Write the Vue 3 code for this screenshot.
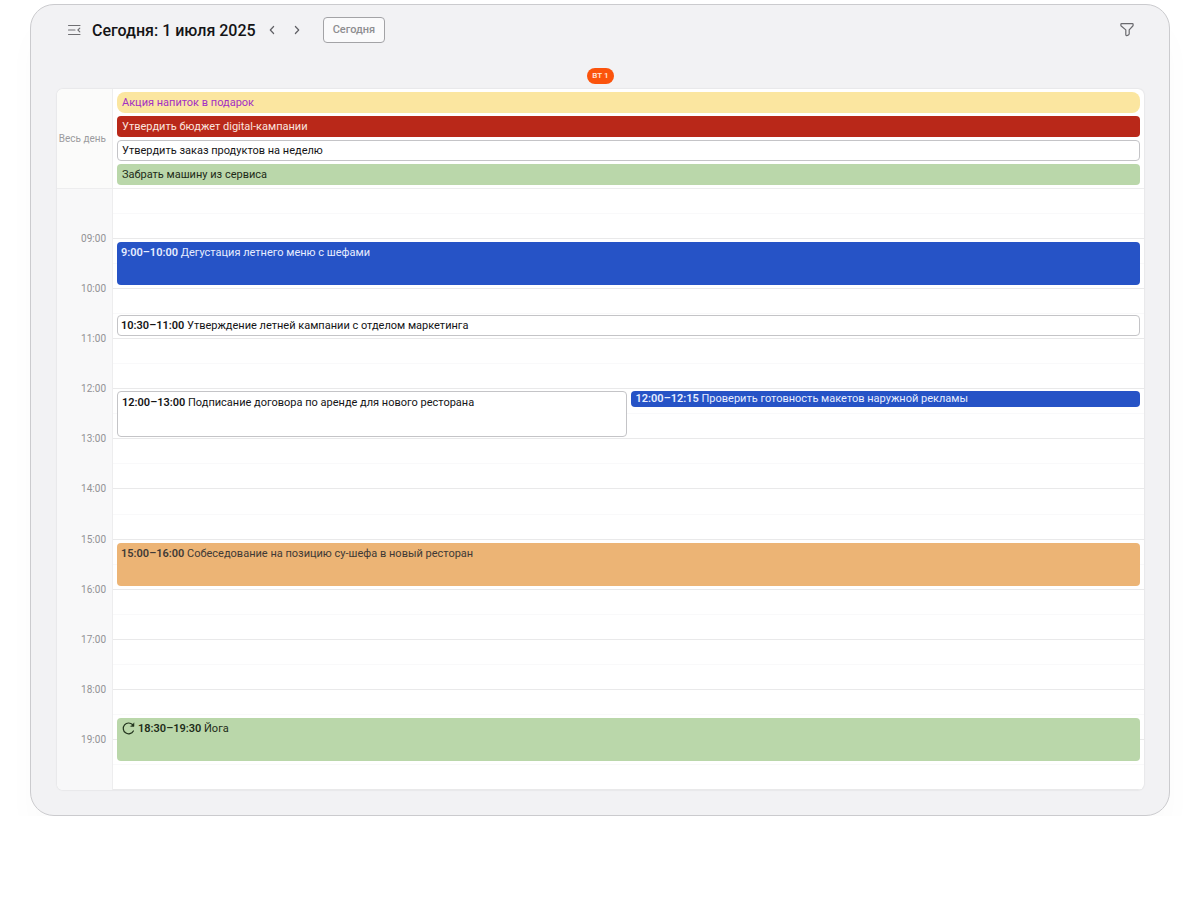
<script setup>
const allDay = [
  { text: 'Акция напиток в подарок', tone: 'yellow' },
  { text: 'Утвердить бюджет digital-кампании', tone: 'red' },
  { text: 'Утвердить заказ продуктов на неделю', tone: 'white' },
  { text: 'Забрать машину из сервиса', tone: 'green' },
]

const FIRST_HOUR = 8
const hours = Array.from({ length: 11 }, (_, i) => FIRST_HOUR + 1 + i)
const halves = Array.from({ length: 24 }, (_, i) => i)

const events = [
  { from: 9, to: 10, time: '9:00–10:00', text: 'Дегустация летнего меню с шефами', tone: 'blue', lane: 'full' },
  { from: 10.5, to: 11, time: '10:30–11:00', text: 'Утверждение летней кампании с отделом маркетинга', tone: 'white', lane: 'full' },
  { from: 12, to: 13, time: '12:00–13:00', text: 'Подписание договора по аренде для нового ресторана', tone: 'white', lane: 'left' },
  { from: 12, to: 12.5, time: '12:00–12:15', text: 'Проверить готовность макетов наружной рекламы', tone: 'blue', lane: 'right', short: true },
  { from: 15, to: 16, time: '15:00–16:00', text: 'Собеседование на позицию су-шефа в новый ресторан', tone: 'orange', lane: 'full' },
  { from: 18.5, to: 19.5, time: '18:30–19:30', text: 'Йога', tone: 'green', lane: 'full', repeat: true },
]

const row = (hour) => (hour - FIRST_HOUR) * 2 + 1
const rows = (from, to) => ({ gridRow: `${row(from)} / ${row(to)}` })
const label = (hour) => `${String(hour).padStart(2, '0')}:00`
</script>

<template>
  <main class="frame">
    <header class="toolbar">
      <button class="icon-btn" type="button" aria-label="Меню">
        <svg width="14" height="14" viewBox="0 0 14 14" fill="none" stroke="#6f6f72" stroke-width="1.1" stroke-linecap="round" stroke-linejoin="round">
          <path d="M1.5 2.5h11.5M1.5 7h6.5M1.5 11.5h11.5M12.8 5.2 10.9 7l1.9 1.8" />
        </svg>
      </button>
      <h1 class="title">Сегодня: 1 июля 2025</h1>
      <button class="icon-btn prev" type="button" aria-label="Предыдущий день">
        <svg width="14" height="14" viewBox="0 0 14 14" fill="none" stroke="#606065" stroke-width="1.2" stroke-linecap="round" stroke-linejoin="round">
          <path d="M8.6 3.5 5.3 7l3.3 3.5" />
        </svg>
      </button>
      <button class="icon-btn next" type="button" aria-label="Следующий день">
        <svg width="14" height="14" viewBox="0 0 14 14" fill="none" stroke="#606065" stroke-width="1.2" stroke-linecap="round" stroke-linejoin="round">
          <path d="M5.4 3.5 8.7 7l-3.3 3.5" />
        </svg>
      </button>
      <button class="today" type="button">Сегодня</button>
      <button class="icon-btn filter" type="button" aria-label="Фильтр">
        <svg width="14" height="14" viewBox="0 1 14 14" fill="none" stroke="#6a6a6e" stroke-width="1.2" stroke-linejoin="round">
          <path d="M1.6 1.6h10.8q.7 0 .7.7v.9q0 .5-.3.8L9.2 7.9v3.9q0 .6-.5.9l-1.2.7q-1.7.5-1.7-.9V7.9L1.2 4Q.9 3.7.9 3.2v-.9q0-.7.7-.7z" />
        </svg>
      </button>
    </header>

    <div class="day-row"><span class="day">ВТ 1</span></div>

    <section class="board">
      <div class="all-day">
        <div class="all-day-label">Весь день</div>
        <ul class="all-day-list">
          <li v-for="item in allDay" :key="item.text" class="chip" :class="item.tone">{{ item.text }}</li>
        </ul>
      </div>

      <div class="hours">
        <div class="gutter"></div>
        <div
          v-for="n in halves"
          :key="'s' + n"
          class="slot"
          :class="{ hourly: n % 2 === 1 }"
          :style="{ gridRow: n + 1 }"
        ></div>
        <time v-for="h in hours" :key="h" class="hour" :style="rows(h - 0.5, h + 0.5)">{{ label(h) }}</time>
        <article
          v-for="e in events"
          :key="e.text"
          class="event"
          :class="[e.tone, e.lane, { short: e.short, slim: e.to - e.from < 1 && !e.short }]"
          :style="rows(e.from, e.to)"
        >
          <svg v-if="e.repeat" class="repeat" width="13" height="13" viewBox="0 0 13 13" fill="none" stroke="#22331d" stroke-width="1.2" stroke-linecap="round" stroke-linejoin="round">
            <path d="M11.4 9A5.4 5.4 0 1 1 10.6 2.7" />
            <path d="M12 1.2v3.2H8.8z" fill="#22331d" stroke-width=".5" />
          </svg>
          <p class="event-text"><b>{{ e.time }}</b> {{ e.text }}</p>
        </article>
      </div>
    </section>
  </main>
</template>

<style>
body {
  margin: 0;
  background: #fff;
}
</style>

<style scoped>
.frame {
  box-sizing: border-box;
  margin: 4px 30px 0;
  padding: 12px 25px 25px 26px;
  border: 1px solid #cbcbce;
  border-radius: 24px;
  background: #f2f2f4;
  box-shadow: 0 24px 32px rgba(0, 0, 0, 0.02);
  font-family: Roboto, "Noto Sans", sans-serif;
  color: #141416;
}

.toolbar {
  display: flex;
  align-items: center;
  height: 26px;
  padding: 0 10px;
}

.icon-btn {
  display: flex;
  padding: 0;
  border: 0;
  background: none;
  cursor: pointer;
}

.title {
  margin: 0 9px 0 11px;
  padding-top: 2px;
  font-size: 16px;
  line-height: 24px;
  font-weight: 500;
  white-space: nowrap;
}

.next {
  margin: 0 19px 0 11px;
}

.today {
  box-sizing: border-box;
  height: 26px;
  padding: 0 9px;
  border: 1px solid #a3a3a6;
  border-radius: 4px;
  background: #fafafb;
  color: #8e8e91;
  font: 500 11px/24px Roboto, "Noto Sans", sans-serif;
  cursor: pointer;
}

.filter {
  margin-left: auto;
}

.day-row {
  display: flex;
  justify-content: center;
  margin: 25px 0 5px;
}

.day {
  padding: 0 5px;
  border-radius: 8px;
  background: #fb530c;
  color: #ffe6da;
  font-size: 8px;
  line-height: 16px;
  font-weight: 600;
}

.board {
  overflow: hidden;
  border-radius: 6px;
  background: #fff;
  box-shadow: 0 0 2px rgba(0, 0, 0, 0.14);
}

.all-day {
  display: grid;
  grid-template-columns: 56px 1fr;
  border-bottom: 1px solid #ededee;
}

.all-day-label {
  display: flex;
  align-items: center;
  justify-content: flex-end;
  padding-right: 6px;
  border-right: 1px solid #ededee;
  background: #fbfbfa;
  color: #9c9c9f;
  font-size: 10px;
  line-height: 12px;
  white-space: nowrap;
}

.all-day-list {
  display: grid;
  gap: 3px;
  margin: 0;
  padding: 3px 4px;
  list-style: none;
}

.chip,
.event {
  box-sizing: border-box;
  border: 1px solid transparent;
  border-radius: 4px;
  font-size: 11px;
}

.chip {
  padding: 1px 4px 0;
  line-height: 18px;
  height: 21px;
}

.yellow {
  border-radius: 8px;
  background: #fbe6a0;
  color: #a32fc4;
}

.red {
  background: #b92819;
  color: #fbe4df;
}

.white {
  border-color: #c4c4c7;
  background: #fff;
}

.green {
  background: #bad7aa;
  color: #1d2b18;
}

.blue {
  background: #2653c6;
  color: #e6edff;
}

.orange {
  background: #ecb475;
  color: #403a36;
}

.hours {
  display: grid;
  grid-template-columns: 56px 1fr 1fr;
  grid-template-rows: repeat(24, minmax(0, 1fr));
  min-height: 601px;
}

.gutter {
  grid-column: 1;
  grid-row: 1 / -1;
  border-right: 1px solid #ededee;
  background: #f8f8f9;
}

.slot {
  grid-column: 2 / 4;
  border-bottom: 1px solid #f9f9fa;
}

.slot.hourly {
  border-bottom-color: #e9e9ea;
}

.hour {
  grid-column: 1;
  align-self: center;
  padding-right: 7px;
  color: #929295;
  font-size: 10px;
  line-height: 12px;
  text-align: right;
}

.event {
  display: flex;
  align-items: flex-start;
  gap: 3px;
  min-width: 0;
  margin: 3px 4px 4px;
  padding: 3px;
  line-height: 14px;
}

.full {
  grid-column: 2 / 4;
}

.slim {
  margin: 1px 4px 3px;
  padding: 3px 3px 0;
}

.left {
  grid-column: 2;
  margin: 2px 2px 2px 4px;
  padding: 4px;
}

.right {
  grid-column: 3;
  margin: 2px 4px 2px 2px;
}

.short {
  align-self: start;
  padding: 0 4px;
}

.repeat {
  flex: none;
  margin-left: 1px;
}

.event-text {
  margin: 0;
  white-space: nowrap;
}

.event-text b {
  font-weight: 600;
}
</style>
